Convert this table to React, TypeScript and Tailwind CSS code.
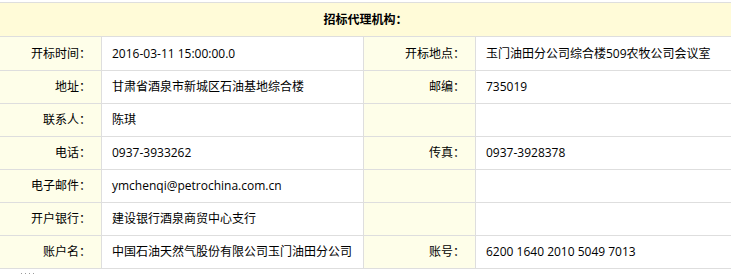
type Row = {
  label: string;
  value: string;
  label2?: string;
  value2?: string;
  tall?: boolean;
};

const rows: Row[] = [
  {
    label: "开标时间：",
    value: "2016-03-11 15:00:00.0",
    label2: "开标地点：",
    value2: "玉门油田分公司综合楼509农牧公司会议室",
    tall: true,
  },
  {
    label: "地址：",
    value: "甘肃省酒泉市新城区石油基地综合楼",
    label2: "邮编：",
    value2: "735019",
  },
  { label: "联系人：", value: "陈琪" },
  {
    label: "电话：",
    value: "0937-3933262",
    label2: "传真：",
    value2: "0937-3928378",
  },
  { label: "电子邮件：", value: "ymchenqi@petrochina.com.cn" },
  { label: "开户银行：", value: "建设银行酒泉商贸中心支行" },
  {
    label: "账户名：",
    value: "中国石油天然气股份有限公司玉门油田分公司",
    label2: "账号：",
    value2: "6200 1640 2010 5049 7013",
  },
];

function Label({ text, tall }: { text?: string; tall?: boolean }) {
  return (
    <div
      className={`flex items-center justify-end bg-[#fefee9] pr-[10px] whitespace-nowrap ${
        tall ? "h-[33px]" : "h-[32px]"
      }`}
    >
      {text}
    </div>
  );
}

function Value({ text }: { text?: string }) {
  return (
    <div className="flex items-center bg-white pl-[10px] whitespace-nowrap overflow-hidden">
      {text}
    </div>
  );
}

export default function App() {
  return (
    <div
      className="w-[731px] h-[274px] overflow-hidden bg-white pt-[2px] text-[12px] text-black"
      style={{ fontFamily: '"Open Sans", "Noto Sans CJK SC", sans-serif' }}
    >
      <div className="grid grid-cols-[101px_261px_111px_1fr] gap-px bg-[#dedede] border-y border-[#dedede]">
        <div className="col-span-4 flex h-[33px] items-center justify-center bg-[#fffbd8] font-bold">
          招标代理机构：
        </div>
        {rows.map((r) => (
          <div key={r.label} className="contents">
            <Label text={r.label} tall={r.tall} />
            <Value text={r.value} />
            <Label text={r.label2} tall={r.tall} />
            <Value text={r.value2} />
          </div>
        ))}
      </div>
      <div className="flex gap-[3px] pl-[21px] pt-[4px]">
        {[1, 2, 3, 4].map((i) => (
          <span key={i} className="h-px w-px bg-[#9a9a9a]" />
        ))}
      </div>
    </div>
  );
}
